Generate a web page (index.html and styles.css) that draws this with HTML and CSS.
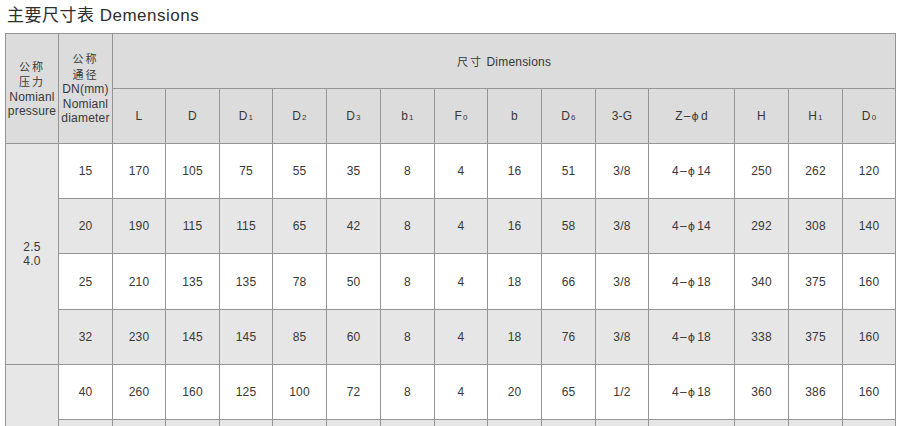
FILE: index.html
```html
<!DOCTYPE html>
<html lang="zh">
<head>
<meta charset="utf-8">
<link rel="stylesheet" href="styles.css">
</head>
<body>
<h1 class="title">主要尺寸表 Demensions</h1>
<table class="dims">
  <colgroup>
    <col class="c53"><col class="c54"><col class="c53"><col class="c54"><col class="c53"><col class="c54"><col class="c54"><col class="c54"><col class="c53"><col class="c54"><col class="c54"><col class="c53"><col class="c86"><col class="c54"><col class="c54"><col class="c53">
  </colgroup>
  <thead>
    <tr class="hrow">
      <th rowspan="2" class="hmulti"><span class="cjk">公称<br>压力</span><br>Nomianl<br>pressure</th>
      <th rowspan="2" class="hmulti"><span class="cjk">公称<br>通径</span><br>DN(mm)<br>Nomianl<br>diameter</th>
      <th colspan="14"><span class="cjk">尺寸</span> Dimensions</th>
    </tr>
    <tr class="hrow">
      <th>L</th><th>D</th><th>D<span class="sub">1</span></th><th>D<span class="sub">2</span></th><th>D<span class="sub">3</span></th><th>b<span class="sub">1</span></th><th>F<span class="sub">0</span></th><th>b</th><th>D<span class="sub">6</span></th><th>3-G</th><th>Z<span class="dash">–</span><span class="phi">ϕ</span>d</th><th>H</th><th>H<span class="sub">1</span></th><th>D<span class="sub">0</span></th>
    </tr>
  </thead>
  <tbody>
    <tr class="row">
      <td rowspan="4" class="press">2.5<br>4.0</td>
      <td>15</td><td>170</td><td>105</td><td>75</td><td>55</td><td>35</td><td>8</td><td>4</td><td>16</td><td>51</td><td>3/8</td><td>4<span class="dash">–</span><span class="phi">ϕ</span>14</td><td>250</td><td>262</td><td>120</td>
    </tr>
    <tr class="row shade">
      <td>20</td><td>190</td><td>115</td><td>115</td><td>65</td><td>42</td><td>8</td><td>4</td><td>16</td><td>58</td><td>3/8</td><td>4<span class="dash">–</span><span class="phi">ϕ</span>14</td><td>292</td><td>308</td><td>140</td>
    </tr>
    <tr class="row row-tall">
      <td>25</td><td>210</td><td>135</td><td>135</td><td>78</td><td>50</td><td>8</td><td>4</td><td>18</td><td>66</td><td>3/8</td><td>4<span class="dash">–</span><span class="phi">ϕ</span>18</td><td>340</td><td>375</td><td>160</td>
    </tr>
    <tr class="row shade">
      <td>32</td><td>230</td><td>145</td><td>145</td><td>85</td><td>60</td><td>8</td><td>4</td><td>18</td><td>76</td><td>3/8</td><td>4<span class="dash">–</span><span class="phi">ϕ</span>18</td><td>338</td><td>375</td><td>160</td>
    </tr>
    <tr class="row">
      <td rowspan="2" class="press"></td>
      <td>40</td><td>260</td><td>160</td><td>125</td><td>100</td><td>72</td><td>8</td><td>4</td><td>20</td><td>65</td><td>1/2</td><td>4<span class="dash">–</span><span class="phi">ϕ</span>18</td><td>360</td><td>386</td><td>160</td>
    </tr>
    <tr class="row shade">
      <td></td><td></td><td></td><td></td><td></td><td></td><td></td><td></td><td></td><td></td><td></td><td></td><td></td><td></td><td></td>
    </tr>
  </tbody>
</table>
</body>
</html>
```
FILE: styles.css
```css
html, body {
  margin: 0;
  padding: 0;
  background: #ffffff;
}
body {
  padding: 0 5px;
  font-family: "Liberation Sans", Arial, "Noto Sans CJK SC", sans-serif;
  color: #333333;
}
.title {
  margin: 0 0 4px 0;
  padding: 2px 0 0 2px;
  font-size: 17px;
  line-height: 27px;
  font-weight: normal;
  letter-spacing: 0.5px;
  color: #2e2e2e;
  font-family: "Liberation Sans", Arial, "Noto Sans CJK SC", sans-serif;
}
.dims {
  border-collapse: collapse;
  table-layout: fixed;
  width: 891px;
  font-size: 12px;
}
.c53 { width: 53px; }
.c54 { width: 54px; }
.c86 { width: 86px; }
.dims th, .dims td {
  border: 1px solid #959595;
  padding: 0;
  text-align: center;
  vertical-align: middle;
  font-weight: normal;
  color: #383838;
  white-space: nowrap;
  overflow: hidden;
  letter-spacing: 0.2px;
}
.dims th {
  background: #dcdcdc;
}
.hrow { height: 55px; }
.hmulti {
  line-height: 14.5px;
}
.cjk {
  font-family: "Noto Sans CJK SC", sans-serif;
  font-size: 11px;
  letter-spacing: 2px;
}
.sub {
  font-size: 8px;
  vertical-align: baseline;
  margin-left: 1px;
}
.dash {
  margin: 0 1px;
}
.phi {
  font-family: "DejaVu Sans", sans-serif;
  font-size: 11px;
  margin-right: 2px;
}
.row { height: 55px; }
.row-tall { height: 56px; }
.shade > td { background-color: #e6e6e6; }
.dims td.press {
  background-color: #e7e7e7;
  line-height: 14px;
}
```
